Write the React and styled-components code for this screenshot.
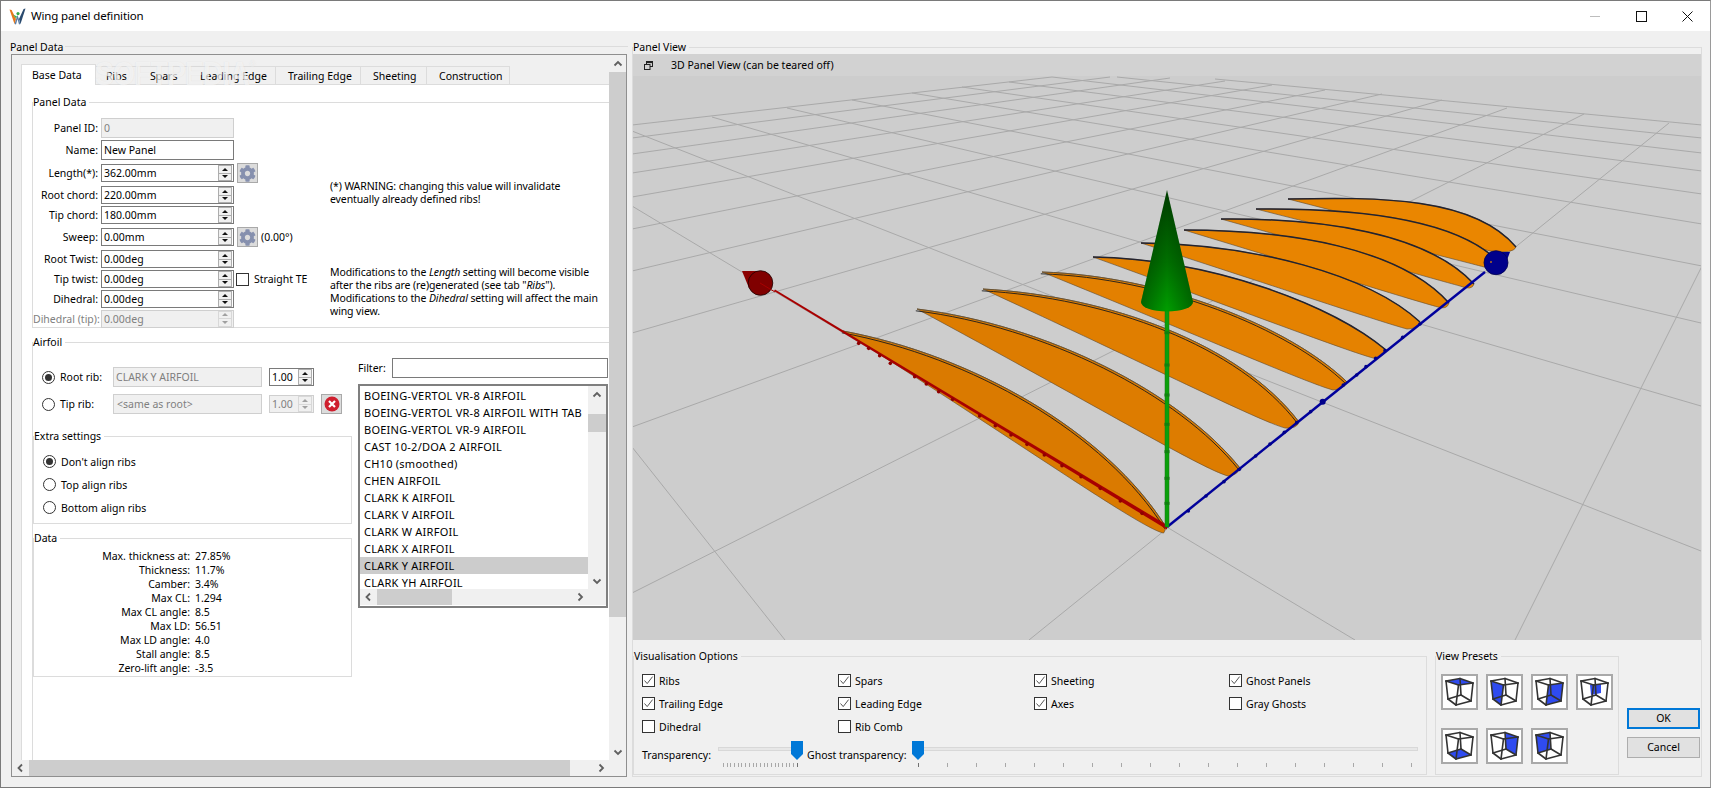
import React from "react";
import styled, { createGlobalStyle } from "styled-components";
import { FaCog } from "react-icons/fa";

const UI_FONT = `"Noto Sans", "Open Sans", Roboto, sans-serif`;

const Global = createGlobalStyle`
  html, body { margin: 0; padding: 0; background: #f0f0f0; overflow: hidden; }
  body { font-family: ${UI_FONT}; font-size: 10.5px; color: #000; }
  * { box-sizing: border-box; }
`;

const Window = styled.div`
  width: 1711px; height: 788px; display: flex; flex-direction: column;
  background: #f0f0f0; border: 1px solid #7a7a7a; border-right-color: #9a9a9a;
  line-height: 14px; white-space: nowrap;
`;
const TitleBar = styled.div`
  height: 30px; flex: none; background: #fff; display: flex; align-items: center; padding-left: 8px;
`;
const TitleText = styled.div`
  margin-left: 5px; font-size: 11.5px; letter-spacing: -0.15px; line-height: 16px; flex: 1;
`;
const WinButtons = styled.div`
  display: flex; align-items: center; padding-right: 17px;
`;
const WinGlyph = styled.svg`
  width: 11px; height: 11px; display: block; margin-left: ${p => p.$ml}px;
`;
const Body = styled.div`
  flex: 1; display: flex; padding-top: 9px; min-height: 0;
`;

/* ------- group boxes ------- */
const Group = styled.fieldset`
  margin: 0; padding: 0; min-width: 0; border: 1px solid #dcdcdc;
`;
const Legend = styled.legend`
  padding: 0 3px 0 0; margin: 0; line-height: 14px; height: 14px; font-size: 10.5px;
`;

const LeftSide = styled.div`
  width: 631px; flex: none; display: flex; flex-direction: column;
`;
const PlainTitle = styled.div`
  height: 14px; padding-left: 9px; display: flex; align-items: center; gap: 2px;
  &::after { content: ""; flex: 1; height: 1px; margin-top: -1px; background: #dcdcdc; margin-right: 4px; }
`;
const ScrollFrame = styled.div`
  position: relative; margin-left: 10px; width: 616px; height: 723px; border: 1px solid #8f8f8f;
  display: grid; grid-template-columns: 597px 17px; grid-template-rows: 705px 16px; background: #f0f0f0;
`;
const ScrollContent = styled.div`
  overflow: hidden; padding: 9px 0 0 9px; display: flex; flex-direction: column; min-height: 0;
`;
const Watermark = styled.div`
  position: absolute; z-index: 3; left: 83px; top: 1px; font: 700 34px/34px "Liberation Sans", sans-serif; letter-spacing: -1px;
  transform: scaleX(0.83); transform-origin: left top;
  color: rgba(255,255,255,.6); pointer-events: none; text-shadow: 0 0 1px rgba(190,190,190,.4);
  & sup { font-size: 9px; font-weight: 400; line-height: 0; vertical-align: 18px; margin-left: 1px; }
`;

/* ------- tabs ------- */
const TabBar = styled.div`
  display: flex; align-items: flex-end; height: 21px; flex: none; position: relative; z-index: 1;
`;
const Tab = styled.div`
  width: ${p => p.$w}px; height: ${p => (p.$active ? 21 : 19)}px;
  background: ${p => (p.$active ? "#fff" : "#f0f0f0")};
  border: 1px solid #dcdcdc; border-left: ${p => (p.$active ? "1px solid #dcdcdc" : "none")};
  border-bottom: ${p => (p.$active ? "none" : "1px solid #dcdcdc")};
  padding-left: ${p => p.$pl}px; line-height: ${p => (p.$active ? 20 : 18)}px;
`;
const TabPane = styled.div`
  flex: 1; background: #fff; border-left: 1px solid #dcdcdc; border-top: 1px solid #dcdcdc; margin-top: -1px;
  padding: 10px 0 0 10px; display: flex; flex-direction: column; min-height: 0; width: 588px;
`;
const PanelGroup = styled(Group)`
  border-width: 1px 0 1px 1px; height: 233px; flex: none; width: 577px;
`;
const PanelBody = styled.div`
  display: flex; padding-top: 9px;
`;
const FormCol = styled.div`
  width: 297px; flex: none;
`;
const FormRow = styled.div`
  display: flex; align-items: center; height: ${p => p.$h || 18}px; margin-top: ${p => p.$mt || 0}px;
`;
const FormLabel = styled.div`
  width: 65px; margin-right: 3px; text-align: right; flex: none; color: ${p => (p.$off ? "#808080" : "#000")};
`;
const TextField = styled.div`
  height: ${p => p.$h || 20}px; width: ${p => p.$w || 133}px; flex: none; padding-left: ${p => p.$pl || 2}px;
  line-height: ${p => (p.$h || 20) - 2}px;
  border: 1px solid ${p => (p.$off ? "#cfcfcf" : "#7a7a7a")};
  background: ${p => (p.$off ? "#f0f0f0" : "#fff")}; color: ${p => (p.$off ? "#7f7f7f" : "#000")};
`;
const SpinBox = styled.div`
  display: flex; flex: none; height: 18px; width: ${p => p.$w || 133}px;
  border: 1px solid ${p => (p.$off ? "#cfcfcf" : "#7a7a7a")};
  background: ${p => (p.$off ? "#f0f0f0" : "#fff")}; color: ${p => (p.$off ? "#7f7f7f" : "#000")};
`;
const SpinValue = styled.div`
  flex: 1; padding-left: 2px; line-height: 16px;
`;
const SpinBtns = styled.div`
  width: 14px; margin-right: 1px; display: flex; flex-direction: column; flex: none;
`;
const SpinBtn = styled.div`
  flex: 1; border: 1px solid ${p => (p.$off ? "#d8d8d8" : "#adadad")}; background: #f0f0f0;
  display: flex; align-items: center; justify-content: center;
  & + & { border-top: none; }
  &::after {
    content: ""; width: 0; height: 0; border-left: 3px solid transparent; border-right: 3px solid transparent;
    ${p => (p.$up ? "border-bottom" : "border-top")}: 3px solid ${p => (p.$off ? "#a0a0a0" : "#111")};
  }
`;
const ToolBtn = styled.div`
  width: 21px; height: 20px; flex: none; margin-left: ${p => p.$ml || 3}px; border: 1px solid #a9a9a9; background: #dcdcdc;
  display: flex; align-items: center; justify-content: center;
`;
const AfterText = styled.div`
  margin-left: 3px;
`;
const CheckBoxBox = styled.div`
  width: 13px; height: 13px; flex: none; border: 1px solid #333; background: #fff;
  display: flex; align-items: center; justify-content: center; margin-left: ${p => p.$ml || 0}px;
`;
const StraightLabel = styled.div`
  margin-left: 5px;
`;
const NotesCol = styled.div`
  display: flex; flex-direction: column; line-height: 13px; letter-spacing: -0.11px;
`;
const Note = styled.div`
  margin-top: ${p => p.$mt}px;
`;

/* ------- airfoil ------- */
const AirfoilGroup = styled(Group)`
  border-width: 1px 0 0 1px; margin-top: 7px; flex: 1; width: 577px;
`;
const AirfoilBody = styled.div`
  display: flex;
`;
const AirfoilLeft = styled.div`
  width: 319px; flex: none; padding-top: 18px;
`;
const RibRow = styled.div`
  display: flex; align-items: center; height: 20px; margin-top: ${p => p.$mt || 0}px; padding-left: 9px;
`;
const RadioMark = styled.div`
  width: 13px; height: 13px; border-radius: 50%; border: 1px solid #333; background: #fff; flex: none;
  display: flex; align-items: center; justify-content: center;
  &::after { content: ""; width: 7px; height: 7px; border-radius: 50%; background: ${p => (p.$on ? "#333" : "transparent")}; }
`;
const RibLabel = styled.div`
  width: 58px; padding-left: 5px; flex: none;
`;
const SpinGap = styled.div`
  margin-left: 7px; flex: none;
`;
const ExtraGroup = styled(Group)`
  width: 319px; margin-top: 15px; height: 95px;
`;
const RadioList = styled.div`
  padding: 7px 0 0 9px; display: grid; grid-auto-rows: 23px;
`;
const RadioRow = styled.div`
  display: flex; align-items: center; gap: 5px;
`;
const DataGroup = styled(Group)`
  width: 319px; margin-top: 7px; height: 146px;
`;
const DataGrid = styled.div`
  padding-top: 4px; display: grid; grid-template-columns: 156px 1fr; column-gap: 5px; grid-auto-rows: 14px;
`;
const DataKey = styled.div`
  text-align: right;
`;
const AirfoilRight = styled.div`
  margin-left: 6px; width: 250px; flex: none; padding-top: 9px;
`;
const FilterRow = styled.div`
  display: flex; align-items: center; justify-content: space-between;
`;
const FilterBox = styled.div`
  width: 216px; height: 20px; border: 1px solid #7a7a7a; background: #fff;
`;
const ListBox = styled.div`
  margin-top: 6px; height: 224px; border: 2px solid #7f7f7f; background: #fff;
  display: grid; grid-template-columns: 1fr 18px; grid-template-rows: 203px 16px;
`;
const ListRows = styled.div`
  overflow: hidden; padding-top: 1px;
`;
const ListRow = styled.div`
  height: 17px; line-height: 17px; padding-left: 4px; width: 228px; overflow: hidden;
  font-size: 11px; letter-spacing: 0.25px;
  background: ${p => (p.$sel ? "#cccccc" : "transparent")};
`;

/* ------- scrollbars ------- */
const VBar = styled.div`
  background: #f0f0f0; display: flex; flex-direction: column; align-items: stretch; height: 100%;
`;
const HBar = styled.div`
  background: #f0f0f0; display: flex; align-items: stretch; width: 100%;
`;
const BarArrow = styled.div`
  flex: none; width: ${p => (p.$h ? "17px" : "auto")}; height: ${p => (p.$h ? "auto" : "17px")};
  display: flex; align-items: center; justify-content: center;
`;
const BarTrack = styled.div`
  flex: 1; display: flex; flex-direction: ${p => (p.$h ? "row" : "column")}; min-width: 0; min-height: 0;
`;
const BarThumb = styled.div`
  flex: none; background: #cdcdcd; ${p => (p.$h ? `width: ${p.$len}px;` : `height: ${p.$len}px;`)}
  ${p => (p.$h ? `margin-left: ${p.$off}px;` : `margin-top: ${p.$off}px;`)}
`;
const Corner = styled.div`
  background: #f0f0f0;
`;

/* ------- right side ------- */
const RightGroup = styled(Group)`
  width: 1070px; height: 737px; flex: none; display: block;
`;
const ViewArea = styled.div`
  height: 586px; display: flex; flex-direction: column; background: #cdcdcd;
`;
const ViewHeader = styled.div`
  height: 22px; flex: none; background: #d2d2d2; display: flex; align-items: center; padding-left: 11px; gap: 18px;
`;
const ViewCanvas = styled.svg`
  display: block; width: 1068px; height: 564px;
`;
const BottomRow = styled.div`
  display: flex; gap: 8px; padding-top: 9px; height: 136px;
`;
const VisGroup = styled(Group)`
  width: 794px; height: 126px; flex: none;
`;
const OptionGrid = styled.div`
  padding: 6px 0 0 8px; display: grid; grid-template-columns: 196px 196px 195px 1fr; grid-auto-rows: 23px;
`;
const Option = styled.div`
  display: flex; align-items: center; gap: 4px;
`;
const SliderRow = styled.div`
  display: flex; padding: 3px 0 0 8px; align-items: flex-start;
`;
const SliderLabel = styled.div`
  width: ${p => p.$w}px; line-height: 14px; margin-top: 7px; flex: none; margin-left: ${p => p.$ml || 0}px;
`;
const Slider = styled.div`
  position: relative; width: ${p => p.$w}px; height: 26px; flex: none;
`;
const Groove = styled.div`
  height: 4px; margin-top: 6px; background: #e7e7e7; border: 1px solid #d8d8d8;
`;
const TickRow = styled.div`
  display: flex; justify-content: space-between; margin-top: 12px; padding: 0 ${p => p.$inset}px;
`;
const Tick = styled.div`
  width: 1px; height: 4px; background: ${p => (p.$strong ? "#707070" : "#a8a8a8")};
`;
const Thumb = styled.div`
  position: absolute; top: 0; width: 12px; height: 19px; background: #0078d7;
  clip-path: polygon(0 0, 100% 0, 100% 68%, 50% 100%, 0 68%);
`;
const PresetGroup = styled(Group)`
  width: 184px; height: 126px; flex: none;
`;
const PresetGrid = styled.div`
  padding: 11px 0 0 5px; display: grid; grid-template-columns: repeat(4, 37px); column-gap: 8px; row-gap: 18px; grid-auto-rows: 36px;
`;
const PresetBtn = styled.div`
  border: 2px solid #a9a9a9; background: #fff;
`;
const PresetSvg = styled.svg`
  display: block; width: 33px; height: 32px;
`;
const ActionCol = styled.div`
  width: 73px; flex: none; padding-top: 59px; display: flex; flex-direction: column; gap: 8px;
`;
const ActionBtn = styled.div`
  height: 21px; text-align: center; font-size: 10.5px;
  line-height: ${p => (p.$primary ? 17 : 19)}px; background: #e1e1e1;
  border: ${p => (p.$primary ? "2px solid #0078d7" : "1px solid #adadad")};
`;

/* ------- icons ------- */
const Chev = ({ dir, off }) => {
  const d = {
    left: "M6 1.5 2.5 5 6 8.5", right: "M3.5 1.5 7 5 3.5 8.5",
    up: "M1.5 6.5 5 3l3.5 3.5", down: "M1.5 3.5 5 7l3.5-3.5",
  }[dir];
  return (
    <svg width="10" height="10" viewBox="0 0 10 10">
      <path d={d} fill="none" stroke={off ? "#a3a3a3" : "#606060"} strokeWidth="1.8" />
    </svg>
  );
};

const Gear = () => <FaCog size={17} color="#7d88aa" style={{ opacity: 0.9 }} />;

const Check = () => (
  <svg width="11" height="11" viewBox="0 0 11 11">
    <path d="M1.5 5.5 4.2 8.6 9.6 1.6" fill="none" stroke="#555" strokeWidth="1" />
  </svg>
);

const Logo = () => (
  <svg width="17" height="17" viewBox="0 0 17 17" style={{ flex: "none" }}>
    <path d="M0.5 1.5 5.5 16 7 11 2.6 2z" fill="#e8791c" />
    <path d="M16.5 0.5 11.5 16 10 11 14.6 1z" fill="#2a4a6e" />
    <path d="M5.5 16 8.5 7l3 9-1.5.5L8.5 11 7 16.5z" fill="#5c7ea6" />
    <circle cx="9" cy="5.6" r="1.6" fill="#35a848" />
    <path d="M4 6.5 8 8.5l-1 2z" fill="#3bb150" />
  </svg>
);

const Spin = ({ value, off, w }) => (
  <SpinBox $off={off} $w={w}>
    <SpinValue>{value}</SpinValue>
    <SpinBtns>
      <SpinBtn $up $off={off} />
      <SpinBtn $off={off} />
    </SpinBtns>
  </SpinBox>
);

const Bar = ({ horizontal, len, off }) =>
  horizontal ? (
    <HBar>
      <BarArrow $h><Chev dir="left" /></BarArrow>
      <BarTrack $h><BarThumb $h $len={len} $off={off} /></BarTrack>
      <BarArrow $h><Chev dir="right" /></BarArrow>
    </HBar>
  ) : (
    <VBar>
      <BarArrow><Chev dir="up" /></BarArrow>
      <BarTrack><BarThumb $len={len} $off={off} /></BarTrack>
      <BarArrow><Chev dir="down" /></BarArrow>
    </VBar>
  );

/* ------- 3D scene ------- */
/* each rib: sharp end s, rounded end e, cubic controls c1 c2, lowest point b */
const RIBS = [
  { fill: "#ea8600", s: [1288, 199], c1: [1379, 197], c2: [1474, 197], e: [1516, 247], b: [1490, 251] },
  { fill: "#ea8600", s: [1256, 209], c1: [1352, 208], c2: [1452, 217], e: [1497, 260], b: [1484, 267] },
  { fill: "#e98500", s: [1221, 219], c1: [1322, 218], c2: [1427, 233], e: [1474, 284], b: [1460, 286] },
  { fill: "#e88400", s: [1184, 230], c1: [1290, 230], c2: [1400, 248], e: [1449, 303], b: [1438, 307] },
  { fill: "#e78300", s: [1141, 243], c1: [1253, 244], c2: [1368, 274], e: [1420, 322], b: [1407, 329] },
  { fill: "#e58200", s: [1093, 257], c1: [1210, 259], c2: [1331, 304], e: [1386, 350], b: [1373, 358] },
  { fill: "#e38000", s: [1042, 272], c1: [1164, 276], c2: [1290, 327], e: [1347, 382], b: [1333, 390] },
  { fill: "#e07e00", s: [983, 289], c1: [1109, 296], c2: [1240, 344], e: [1299, 422], b: [1285, 428] },
  { fill: "#dd7c00", s: [917, 309], c1: [1047, 325], c2: [1180, 393], e: [1240, 468], b: [1228, 476] },
  { fill: "#da7a00", s: [843, 331], c1: [972, 355], c2: [1106, 431], e: [1166, 527], b: [1163, 533] },
];

const GRID = [
  [632, 125, 1052, 77], [632, 138, 1110, 77], [632, 154, 1170, 78], [632, 173, 1225, 81], [632, 197, 1272, 85],
  [632, 229, 1325, 90], [632, 271, 1382, 94], [632, 333, 1442, 100], [632, 427, 1507, 108], [632, 593, 1584, 114],
  [1029, 640, 1669, 123], [1515, 640, 1702, 266],
  [632, 206, 1355, 640], [632, 447, 785, 640], [632, 131, 1701, 551], [712, 117, 1701, 406], [787, 108, 1701, 323],
  [852, 100, 1702, 266], [912, 93, 1702, 224], [962, 87, 1702, 194], [1009, 82, 1702, 171], [1052, 77, 1702, 153],
  [1117, 77, 1702, 138], [1215, 79, 1702, 125],
];

const RED_TICKS = [[1530,640],[1465,603],[1405,565],[1347,530],[1290,497],[1237,465],[1185,433],[1137,405],[1090,377],[1043,348],[962,298],[920,275],[883,252],[848,230],[775,190],[743,167],[710,145],[680,130]]
  .map(([x, y]) => [632 + x / 3, 300 + y / 3]);
const BLUE_TICKS = [[265,993],[318,948],[372,905],[418,868],[467,828],[510,792],[553,757],[590,728],[632,695],[668,665],[730,615],[770,585],[798,560],[827,535],[855,512],[908,472],[960,432]]
  .map(([x, y]) => [1100 + x / 3, 180 + y / 3]);
const GREEN_TICKS = [970, 895, 815, 733, 645, 555, 458].map(y => 180 + y / 3);

const ribTop = r => `M${r.s[0]} ${r.s[1]}C${r.c1[0]} ${r.c1[1]} ${r.c2[0]} ${r.c2[1]} ${r.e[0]} ${r.e[1]}`;
const ribPath = r => {
  const { s, e, b } = r;
  const mx = s[0] + (b[0] - s[0]) * 0.55;
  const my = s[1] + (b[1] - s[1]) * 0.55;
  return `${ribTop(r)}Q${e[0] - 2} ${e[1] + 7} ${b[0]} ${b[1]}C${b[0] - 26} ${b[1] - 7} ${mx.toFixed(1)} ${my.toFixed(1)} ${s[0]} ${s[1]}Z`;
};

const Scene = () => (
  <ViewCanvas viewBox="633 76 1068 564">
    <defs>
      <linearGradient id="coneGrad" x1="0" y1="0" x2="0" y2="1">
        <stop offset="0" stopColor="#003c00" />
        <stop offset="0.6" stopColor="#007000" />
        <stop offset="1" stopColor="#009e00" />
      </linearGradient>
      <linearGradient id="coneSide" x1="0" y1="0" x2="1" y2="0">
        <stop offset="0" stopColor="#002800" stopOpacity=".45" />
        <stop offset="0.5" stopColor="#002800" stopOpacity="0" />
        <stop offset="1" stopColor="#002800" stopOpacity=".45" />
      </linearGradient>
    </defs>
    {GRID.map((l, i) => (
      <line key={i} x1={l[0]} y1={l[1]} x2={l[2]} y2={l[3]} stroke="#a9a9a9" strokeWidth="1" />
    ))}
    {RIBS.map((r, i) => {
      const top = ribTop(r);
      const near = i >= 6;
      return (
        <g key={i}>
          <path d={ribPath(r)} fill={r.fill} stroke="#5c4a30" strokeWidth=".6" />
          <path d={top} fill="none" stroke={near ? "#6b5433" : "#23232f"} strokeWidth={near ? 1 : 1.5} />
          {near && <path d={top} fill="none" stroke="#1c1c1c" strokeWidth=".9" transform="translate(-1.2 1.8)" />}
        </g>
      );
    })}
    <polygon points="1167,525 1167,529.5 774,291 775,289.6" fill="#a80000" />
    {RED_TICKS.map(([x, y], i) => <circle key={i} cx={x} cy={y} r="1.8" fill="#8f0000" />)}
    <path d="M742 271H760L749 288z" fill="#8b0000" />
    <circle cx="760.5" cy="283" r="12.3" fill="#800000" stroke="#1c0000" strokeWidth=".8" />
    <line x1="760" y1="283" x2="775" y2="292" stroke="#a80000" strokeWidth="1" />
    <line x1="1167" y1="527" x2="1485" y2="272" stroke="#00009c" strokeWidth="2.4" />
    {BLUE_TICKS.map(([x, y], i) => <circle key={i} cx={x} cy={y} r={i === 9 ? 3 : 1.8} fill="#00008a" />)}
    <path d="M1490 252H1510L1504 268z" fill="#00008b" />
    <circle cx="1496" cy="262.7" r="12" fill="#00008b" stroke="#000050" strokeWidth=".8" />
    <circle cx="1491" cy="262" r="1" fill="#b06a20" />
    <rect x="1165" y="300" width="4" height="227" fill="#0aa00a" stroke="#187018" strokeWidth=".5" />
    {GREEN_TICKS.map((y, i) => <rect key={i} x="1164.5" y={y - 1.5} width="5" height="3" fill="#108010" />)}
    <path d="M1167 190 1141 302A26 9.5 0 0 0 1193 302Z" fill="url(#coneGrad)" />
    <path d="M1167 190 1141 302A26 9.5 0 0 0 1193 302Z" fill="url(#coneSide)" />
  </ViewCanvas>
);

const V = {
  A: [5, 7], B: [19, 4.5], C: [32, 9], D: [17.5, 11],
  a: [7, 25], b: [20, 21], c: [30, 27], d: [15, 31],
};
const EDGES = ["AB", "BC", "CD", "DA", "ab", "bc", "cd", "da", "Aa", "Bb", "Cc", "Dd"];
const poly = s => s.split("").map(k => V[k].join(",")).join(" ");

const Cube = ({ face, inner }) => (
  <PresetBtn>
    <PresetSvg viewBox="2 2 33 32">
      {face && <polygon points={poly(face)} fill="#2f4bf0" />}
      {inner && <polygon points="14,11 25,10 25,19 15,21" fill="#2f4bf0" />}
      {EDGES.map(e => (
        <line key={e} x1={V[e[0]][0]} y1={V[e[0]][1]} x2={V[e[1]][0]} y2={V[e[1]][1]}
          stroke="#333" strokeWidth="1.6" strokeLinecap="round" />
      ))}
    </PresetSvg>
  </PresetBtn>
);

const AIRFOILS = [
  "BOEING-VERTOL VR-8 AIRFOIL", "BOEING-VERTOL VR-8 AIRFOIL WITH TAB", "BOEING-VERTOL VR-9 AIRFOIL",
  "CAST 10-2/DOA 2 AIRFOIL", "CH10 (smoothed)", "CHEN AIRFOIL", "CLARK K AIRFOIL", "CLARK V AIRFOIL",
  "CLARK W AIRFOIL", "CLARK X AIRFOIL", "CLARK Y AIRFOIL", "CLARK YH AIRFOIL",
];
const DATA = [
  ["Max. thickness at:", "27.85%"], ["Thickness:", "11.7%"], ["Camber:", "3.4%"], ["Max CL:", "1.294"],
  ["Max CL angle:", "8.5"], ["Max LD:", "56.51"], ["Max LD angle:", "4.0"], ["Stall angle:", "8.5"], ["Zero-lift angle:", "-3.5"],
];
const OPTIONS = [
  ["Ribs", 1], ["Spars", 1], ["Sheeting", 1], ["Ghost Panels", 1],
  ["Trailing Edge", 1], ["Leading Edge", 1], ["Axes", 1], ["Gray Ghosts", 0],
  ["Dihedral", 0], ["Rib Comb", 0],
];
const TABS = [
  ["Base Data", 75, 10], ["Ribs", 42, 10], ["Spars", 51, 12], ["Leading Edge", 87, 11],
  ["Trailing Edge", 85, 12], ["Sheeting", 66, 12], ["Construction", 83, 12],
];

export default function App() {
  return (
    <>
      <Global />
      <Window>
        <TitleBar>
          <Logo />
          <TitleText>Wing panel definition</TitleText>
          <WinButtons>
            <WinGlyph viewBox="0 0 11 11"><line x1="0" y1="5.5" x2="10" y2="5.5" stroke="#bdbdbd" /></WinGlyph>
            <WinGlyph $ml={35} viewBox="0 0 11 11"><rect x=".5" y=".5" width="10" height="10" fill="none" stroke="#111" /></WinGlyph>
            <WinGlyph $ml={35} viewBox="0 0 11 11"><path d="M.5.5l10 10M10.5.5l-10 10" fill="none" stroke="#111" /></WinGlyph>
          </WinButtons>
        </TitleBar>
        <Body>
          <LeftSide>
            <PlainTitle>Panel Data</PlainTitle>
            <ScrollFrame>
              <Watermark>SOFTPEDIA<sup>®</sup></Watermark>
              <ScrollContent>
                <TabBar>
                  {TABS.map(([t, w, pl], i) => (
                    <Tab key={t} $w={w} $pl={pl} $active={i === 0}>{t}</Tab>
                  ))}
                </TabBar>
                <TabPane>
                  <PanelGroup>
                    <Legend>Panel Data</Legend>
                    <PanelBody>
                      <FormCol>
                        <FormRow $h={20}><FormLabel>Panel ID:</FormLabel><TextField $off>0</TextField></FormRow>
                        <FormRow $h={20} $mt={2}><FormLabel>Name:</FormLabel><TextField>New Panel</TextField></FormRow>
                        <FormRow $mt={4}><FormLabel>Length(*):</FormLabel><Spin value="362.00mm" /><ToolBtn><Gear /></ToolBtn></FormRow>
                        <FormRow $mt={4}><FormLabel>Root chord:</FormLabel><Spin value="220.00mm" /></FormRow>
                        <FormRow $mt={2}><FormLabel>Tip chord:</FormLabel><Spin value="180.00mm" /></FormRow>
                        <FormRow $mt={4}><FormLabel>Sweep:</FormLabel><Spin value="0.00mm" /><ToolBtn><Gear /></ToolBtn><AfterText>(0.00°)</AfterText></FormRow>
                        <FormRow $mt={4}><FormLabel>Root Twist:</FormLabel><Spin value="0.00deg" /></FormRow>
                        <FormRow $mt={2}><FormLabel>Tip twist:</FormLabel><Spin value="0.00deg" /><CheckBoxBox $ml={2} /><StraightLabel>Straight TE</StraightLabel></FormRow>
                        <FormRow $mt={2}><FormLabel>Dihedral:</FormLabel><Spin value="0.00deg" /></FormRow>
                        <FormRow $mt={2} $h={17}><FormLabel $off>Dihedral (tip):</FormLabel><Spin value="0.00deg" off /></FormRow>
                      </FormCol>
                      <NotesCol>
                        <Note $mt={62}>(*) WARNING: changing this value will invalidate<br />eventually already defined ribs!</Note>
                        <Note $mt={60}>
                          Modifications to the <em>Length</em> setting will become visible<br />
                          after the ribs are (re)generated (see tab "<em>Ribs</em>").<br />
                          Modifications to the <em>Dihedral</em> setting will affect the main<br />
                          wing view.
                        </Note>
                      </NotesCol>
                    </PanelBody>
                  </PanelGroup>
                  <AirfoilGroup>
                    <Legend>Airfoil</Legend>
                    <AirfoilBody>
                      <AirfoilLeft>
                        <RibRow>
                          <RadioMark $on /><RibLabel>Root rib:</RibLabel>
                          <TextField $off $w={149}>CLARK Y AIRFOIL</TextField>
                          <SpinGap><Spin value="1.00" w={45} /></SpinGap>
                        </RibRow>
                        <RibRow $mt={7}>
                          <RadioMark /><RibLabel>Tip rib:</RibLabel>
                          <TextField $off $w={149} $pl={3}>&lt;same as root&gt;</TextField>
                          <SpinGap><Spin value="1.00" w={45} off /></SpinGap>
                          <ToolBtn $ml={7}>
                            <svg width="16" height="16" viewBox="0 0 16 16">
                              <circle cx="8" cy="8" r="7.5" fill="#cf1f2e" />
                              <path d="M5 5l6 6M11 5l-6 6" stroke="#fff" strokeWidth="2.2" />
                            </svg>
                          </ToolBtn>
                        </RibRow>
                        <ExtraGroup>
                          <Legend>Extra settings</Legend>
                          <RadioList>
                            <RadioRow><RadioMark $on />Don't align ribs</RadioRow>
                            <RadioRow><RadioMark />Top align ribs</RadioRow>
                            <RadioRow><RadioMark />Bottom align ribs</RadioRow>
                          </RadioList>
                        </ExtraGroup>
                        <DataGroup>
                          <Legend>Data</Legend>
                          <DataGrid>
                            {DATA.map(([k, v]) => (
                              <React.Fragment key={k}><DataKey>{k}</DataKey><div>{v}</div></React.Fragment>
                            ))}
                          </DataGrid>
                        </DataGroup>
                      </AirfoilLeft>
                      <AirfoilRight>
                        <FilterRow>Filter:<FilterBox /></FilterRow>
                        <ListBox>
                          <ListRows>
                            {AIRFOILS.map(a => <ListRow key={a} $sel={a === "CLARK Y AIRFOIL"}>{a}</ListRow>)}
                          </ListRows>
                          <Bar len={18} off={11} />
                          <Bar horizontal len={75} off={0} />
                          <Corner />
                        </ListBox>
                      </AirfoilRight>
                    </AirfoilBody>
                  </AirfoilGroup>
                </TabPane>
              </ScrollContent>
              <Bar len={545} off={0} />
              <Bar horizontal len={541} off={0} />
              <Corner />
            </ScrollFrame>
          </LeftSide>
          <RightGroup>
            <Legend>Panel View</Legend>
            <ViewArea>
              <ViewHeader>
                <svg width="9" height="9" viewBox="0 0 9 9">
                  <rect x="2.5" y=".5" width="6" height="5" fill="none" stroke="#222" />
                  <rect x="2.5" y=".5" width="6" height="1.6" fill="#222" />
                  <rect x=".5" y="3.5" width="5.5" height="5" fill="#d2d2d2" stroke="#222" />
                </svg>
                3D Panel View (can be teared off)
              </ViewHeader>
              <Scene />
            </ViewArea>
            <BottomRow>
              <VisGroup>
                <Legend>Visualisation Options</Legend>
                <OptionGrid>
                  {OPTIONS.map(([t, on]) => (
                    <Option key={t}><CheckBoxBox>{on ? <Check /> : null}</CheckBoxBox>{t}</Option>
                  ))}
                </OptionGrid>
                <SliderRow>
                  <SliderLabel $w={76}>Transparency:</SliderLabel>
                  <Slider $w={85}>
                    <Groove />
                    <TickRow $inset={5}>
                      {Array.from({ length: 21 }, (_, i) => <Tick key={i} $strong={i === 20} />)}
                    </TickRow>
                    <Thumb style={{ left: 73 }} />
                  </Slider>
                  <SliderLabel $w={105} $ml={4}>Ghost transparency:</SliderLabel>
                  <Slider $w={506}>
                    <Groove />
                    <TickRow $inset={6}>
                      {Array.from({ length: 18 }, (_, i) => <Tick key={i} $strong={i === 0} />)}
                    </TickRow>
                    <Thumb style={{ left: 0 }} />
                  </Slider>
                </SliderRow>
              </VisGroup>
              <PresetGroup>
                <Legend>View Presets</Legend>
                <PresetGrid>
                  <Cube face="ABCD" />
                  <Cube face="ADda" />
                  <Cube face="DCcd" />
                  <Cube inner />
                  <Cube face="abcd" />
                  <Cube face="BCcb" />
                  <Cube face="ABba" />
                </PresetGrid>
              </PresetGroup>
              <ActionCol>
                <ActionBtn $primary>OK</ActionBtn>
                <ActionBtn>Cancel</ActionBtn>
              </ActionCol>
            </BottomRow>
          </RightGroup>
        </Body>
      </Window>
    </>
  );
}
